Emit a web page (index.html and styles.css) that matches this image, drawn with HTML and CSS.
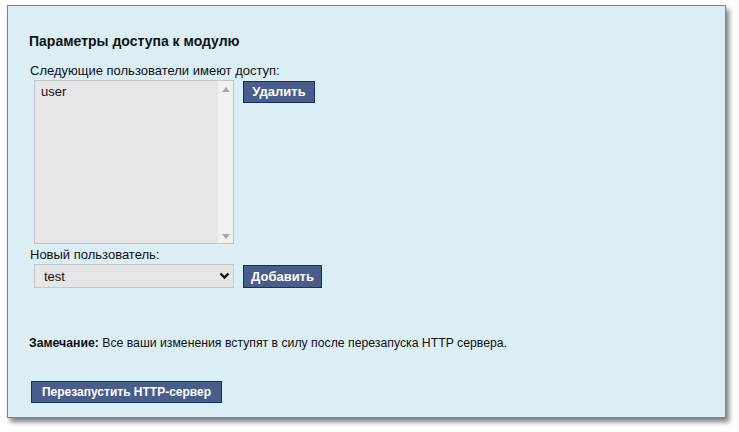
FILE: index.html
```html
<!DOCTYPE html>
<html lang="ru">
<head>
<meta charset="utf-8">
<link rel="stylesheet" href="styles.css">
</head>
<body>
<div class="panel">
  <h2 class="title">Параметры доступа к модулю</h2>
  <div class="label">Следующие пользователи имеют доступ:</div>
  <div class="row">
    <div class="listbox">
      <div class="list-items"><div class="item">user</div></div>
      <div class="scroll">
        <svg class="arrow" width="8" height="5" viewBox="0 0 8 5"><path d="M0 5 L4 0 L8 5 Z" fill="#a8a8a8"/></svg>
        <svg class="arrow" width="8" height="5" viewBox="0 0 8 5"><path d="M0 0 L4 5 L8 0 Z" fill="#a8a8a8"/></svg>
      </div>
    </div>
    <button class="btn btn-del">Удалить</button>
  </div>
  <div class="label label2">Новый пользователь:</div>
  <div class="row row2">
    <div class="selectwrap">
      <select class="select"><option>test</option></select>
      <svg class="chev" width="11" height="8" viewBox="0 0 11 8"><path d="M1.5 1.5 L5.5 5.5 L9.5 1.5" fill="none" stroke="#111" stroke-width="2.4"/></svg>
    </div>
    <button class="btn btn-add">Добавить</button>
  </div>
  <p class="note"><b>Замечание:</b> Все ваши изменения вступят в силу после перезапуска HTTP сервера.</p>
  <button class="btn btn-restart">Перезапустить HTTP-сервер</button>
</div>
</body>
</html>
```

FILE: styles.css
```css
html, body {
  margin: 0;
  padding: 0;
  background: #ffffff;
}
body {
  font-family: "Liberation Sans", Arial, sans-serif;
  font-size: 13px;
  color: #111;
  padding: 5px 0 0 7px;
  height: 432px;
  box-sizing: border-box;
}
.panel {
  background: #dbeef6;
  border: 1px solid #2f9ce0;
  box-shadow: 3px 4px 5px rgba(0, 0, 0, 0.5);
  padding: 0 0 0 21px;
  box-sizing: border-box;
  width: 719px;
  height: 413px;
}
.title {
  margin: 0;
  padding-top: 27px;
  font-size: 14px;
  line-height: 16px;
  font-weight: bold;
  color: #111;
}
.label {
  margin-top: 14px;
  line-height: 16px;
  padding-left: 1px;
}
.row {
  display: flex;
  align-items: flex-start;
  gap: 9px;
  margin-left: 5px;
  margin-top: 1px;
}
.listbox {
  width: 200px;
  height: 164px;
  box-sizing: border-box;
  border: 1px solid #c4c4c4;
  background: #e6e6e6;
  display: flex;
}
.list-items {
  flex: 1;
  padding: 3px 6px;
}
.item {
  line-height: 16px;
}
.scroll {
  width: 15px;
  background: #f1f1f1;
  display: flex;
  flex-direction: column;
  justify-content: space-between;
  align-items: center;
  padding: 6px 0 4px;
}
.arrow {
  display: block;
}
.btn {
  font-family: "Liberation Sans", Arial, sans-serif;
  font-weight: bold;
  font-size: 13px;
  color: #ffffff;
  background: #485d8a;
  border: 1px solid #1b2a6b;
  padding: 0;
  height: 22px;
  line-height: 20px;
  margin: 0;
  border-radius: 0;
  cursor: pointer;
}
.btn-del {
  margin-top: 1px;
  width: 72px;
}
.label2 {
  margin-top: 3px;
}
.row2 {
  margin-top: 1px;
}
.selectwrap {
  position: relative;
  width: 200px;
  height: 24px;
}
.select {
  appearance: none;
  -webkit-appearance: none;
  width: 200px;
  height: 24px;
  box-sizing: border-box;
  background: #e6e6e6;
  border: 1px solid #c6c6c6;
  border-radius: 0;
  font-family: "Liberation Sans", Arial, sans-serif;
  font-size: 13px;
  color: #111;
  padding: 0 0 0 9px;
  margin: 0;
}
.chev {
  position: absolute;
  right: 4px;
  top: 8px;
}
.btn-add {
  margin-top: 1px;
  width: 79px;
  height: 23px;
}
.note {
  margin: 47px 0 0 0;
  font-size: 12.25px;
  line-height: 16px;
}
.btn-restart {
  margin-top: 30px;
  margin-left: 2px;
  width: 191px;
  font-size: 12px;
}
```
